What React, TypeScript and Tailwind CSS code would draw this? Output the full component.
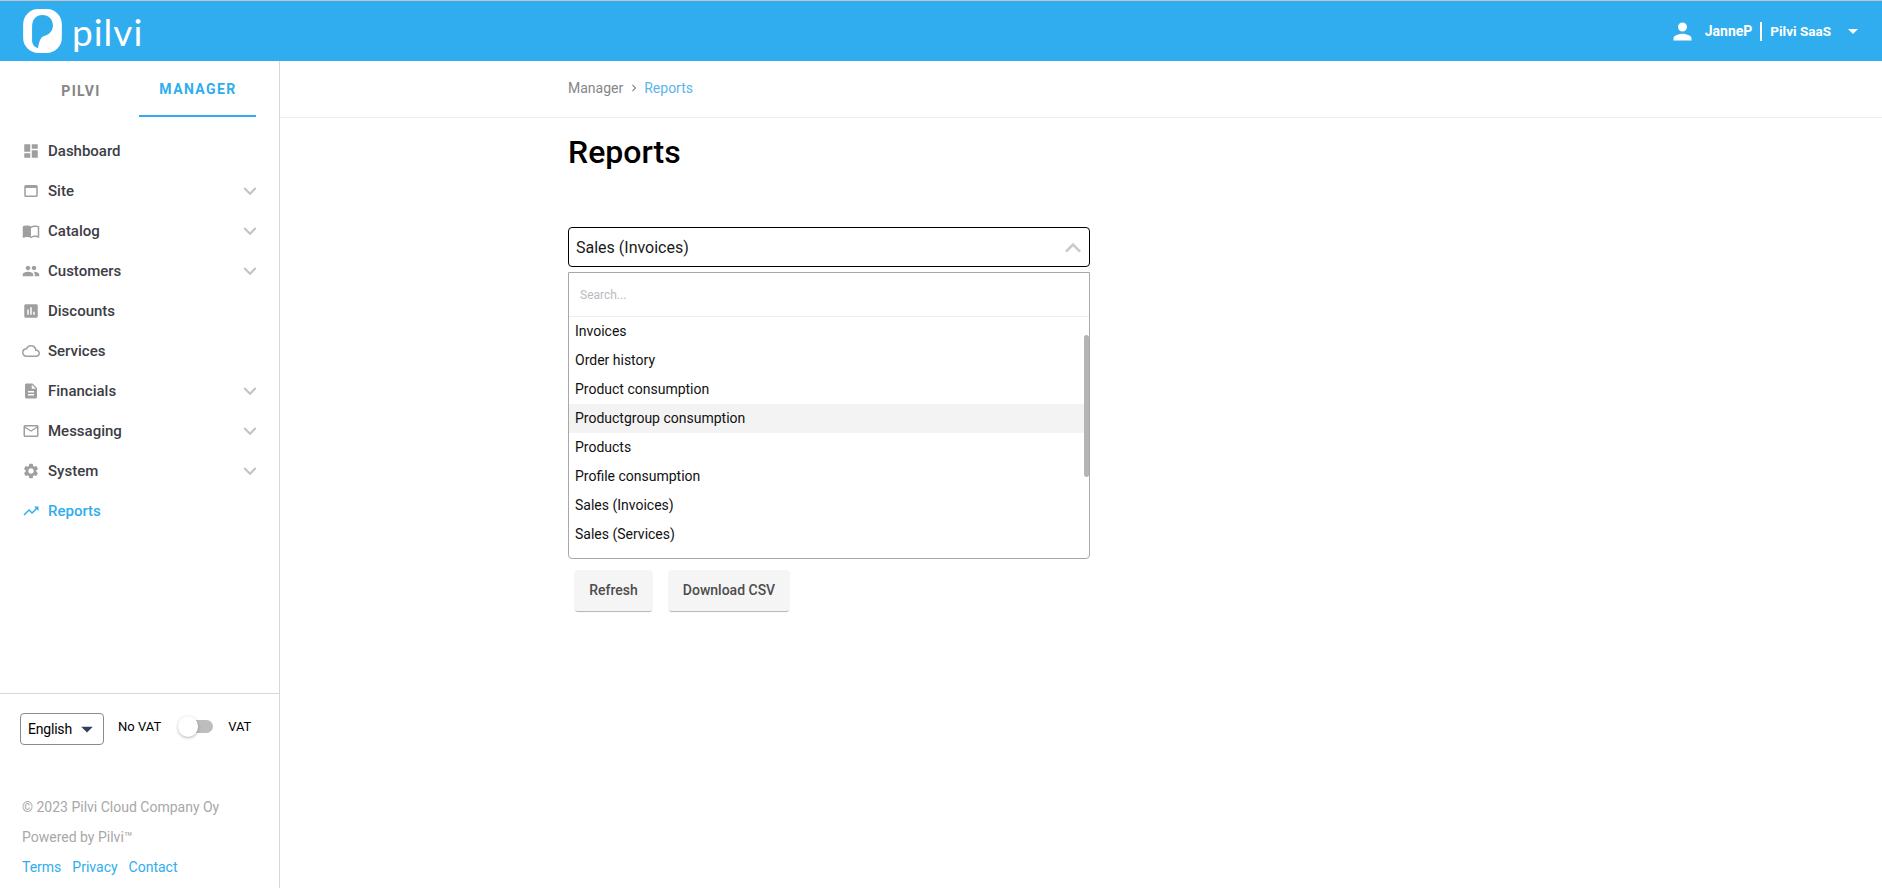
import type { IconType } from "react-icons";
import {
  MdArrowDropDown,
  MdAssessment,
  MdChevronRight,
  MdCloudQueue,
  MdDashboard,
  MdDescription,
  MdExpandLess,
  MdExpandMore,
  MdImportContacts,
  MdMailOutline,
  MdOutlineWebAsset,
  MdPeople,
  MdPerson,
  MdSettings,
  MdTrendingUp,
} from "react-icons/md";

type NavItem = { label: string; icon: IconType; expandable?: boolean; active?: boolean };

const navItems: NavItem[] = [
  { label: "Dashboard", icon: MdDashboard },
  { label: "Site", icon: MdOutlineWebAsset, expandable: true },
  { label: "Catalog", icon: MdImportContacts, expandable: true },
  { label: "Customers", icon: MdPeople, expandable: true },
  { label: "Discounts", icon: MdAssessment },
  { label: "Services", icon: MdCloudQueue },
  { label: "Financials", icon: MdDescription, expandable: true },
  { label: "Messaging", icon: MdMailOutline, expandable: true },
  { label: "System", icon: MdSettings, expandable: true },
  { label: "Reports", icon: MdTrendingUp, active: true },
];

const reportTypes = [
  "Invoices",
  "Order history",
  "Product consumption",
  "Productgroup consumption",
  "Products",
  "Profile consumption",
  "Sales (Invoices)",
  "Sales (Services)",
];

function Logo() {
  return (
    <div className="flex items-center gap-[10px]">
      <svg viewBox="0 0 117 133" className="h-[44px] w-[39px]">
        <rect width="117" height="133" rx="46" fill="#fff" />
        <path
          d="M27 55C27 30 40 18 58 18C78 18 90 32 90 50C90 68 78 78 62 82C52 85 48 100 45 118C35 115 27 108 27 95Z"
          fill="#30adee"
        />
      </svg>
      <span className="font-['Lato',sans-serif] text-[37px] leading-none font-normal tracking-[1px] text-white">
        pilvi
      </span>
    </div>
  );
}

function Header() {
  return (
    <header className="flex h-[61px] shrink-0 items-center justify-between border-t border-[#c4c4c4] bg-[#30adee] pr-[17px] pl-[23px]">
      <Logo />
      <div className="flex items-center text-[13.5px] font-bold text-white">
        <MdPerson size={27} className="mr-[9px]" />
        <span className="text-[14px]">JanneP</span>
        <span className="mx-[8px] h-[19px] w-[2px] bg-white" />
        <span>Pilvi SaaS</span>
        <MdArrowDropDown size={24} className="ml-[10px]" />
      </div>
    </header>
  );
}

function Sidebar() {
  return (
    <aside className="flex w-[280px] shrink-0 flex-col border-r border-[#d6d6d6]">
      <div className="flex h-[56px] shrink-0 px-[23px] text-[14px] font-bold tracking-[0.1em]">
        <div className="flex w-[117px] items-center justify-center pt-[4px] text-[#858585]">PILVI</div>
        <div className="flex w-[118px] items-center justify-center border-b-2 border-[#30adee] pt-[3px] pl-[1px] text-[#30adee]">
          MANAGER
        </div>
      </div>
      <nav className="mt-[14px] flex-1">
        {navItems.map((item) => (
          <div
            key={item.label}
            className={`flex h-10 items-center pr-[16px] pl-[22px] text-[15px] font-medium ${
              item.active ? "text-[#30adee]" : "text-[#3d3d45]"
            }`}
          >
            <item.icon
              size={18}
              className={`mr-[8px] ${item.active ? "text-[#30adee]" : "text-[#a09f9f]"}`}
            />
            <span className="flex-1">{item.label}</span>
            {item.expandable && <MdExpandMore size={26} className="text-[#c2c4c8]" />}
          </div>
        ))}
      </nav>
      <div className="h-[195px] shrink-0 border-t border-[#d9d9d9] px-[20px] pt-[19px]">
        <div className="flex items-start">
          <div className="flex h-[32px] w-[84px] items-center justify-between rounded border border-[#8b8b8b] pr-[2px] pl-[7px] text-[14px] tracking-[-0.2px] text-black">
            English
            <MdArrowDropDown size={28} className="text-[#33415c]" />
          </div>
          <span className="mt-[4px] ml-[14px] text-[13px] text-black">No VAT</span>
          <div className="relative mt-[7px] ml-[22px] h-[13px] w-[30px] rounded-full bg-[#bdbdbd]">
            <div className="absolute top-[-4px] left-[-5px] h-[21px] w-5 rounded-full bg-white shadow-[0_1px_3px_rgba(0,0,0,0.3)]" />
          </div>
          <span className="mt-[4px] ml-[15px] text-[13px] text-black">VAT</span>
        </div>
        <div className="mt-[53px] flex flex-col gap-[12px] pl-[2px] text-[14px] leading-[18px] text-[#a8a8a8]">
          <span>© 2023 Pilvi Cloud Company Oy</span>
          <span>Powered by Pilvi™</span>
          <div className="flex gap-[11px] text-[#30adee]">
            <span>Terms</span>
            <span>Privacy</span>
            <span>Contact</span>
          </div>
        </div>
      </div>
    </aside>
  );
}

function ReportSelect() {
  return (
    <div className="w-[522px]">
      <div className="flex h-10 items-center justify-between rounded border border-black pt-[1px] pl-[7px] text-[16px] text-[#1a1a1a]">
        Sales (Invoices)
        <MdExpandLess size={32} className="text-[#c8cacd]" />
      </div>
      <div className="relative mt-[5px] h-[287px] overflow-hidden rounded-b border border-[#a8a8a8]">
        <div className="flex h-[44px] items-center border-b border-[#eeeeee] px-[11px] text-[12px] text-[#b9bbc0]">
          Search...
        </div>
        {reportTypes.map((name) => (
          <div
            key={name}
            className={`flex h-[29px] items-center px-[6px] text-[14px] text-[#111] ${
              name === "Productgroup consumption" ? "bg-[#f3f3f3]" : ""
            }`}
          >
            {name}
          </div>
        ))}
        <div className="absolute top-[62px] right-0 h-[142px] w-[5px] rounded-sm bg-[#b5b5b5]" />
      </div>
    </div>
  );
}

function Main() {
  return (
    <main className="flex-1">
      <div className="flex h-[57px] items-center gap-[3.5px] border-b border-[#eeeeee] pb-[2px] pl-[288px] text-[14px]">
        <span className="text-[#85868a]">Manager</span>
        <MdChevronRight size={14} className="text-[#85868a]" />
        <span className="text-[#5bb5ea]">Reports</span>
      </div>
      <div className="pl-[288px]">
        <h1 className="mt-[16px] mb-[57px] text-[32px] leading-9 font-medium text-black">Reports</h1>
        <ReportSelect />
        <div className="mt-[11px] ml-[6px] flex gap-[15px] text-[14px] font-medium text-[#4d4d4d]">
          <button className="h-[41px] w-[79px] rounded bg-[#f5f5f5] shadow-[0_2px_1px_-1px_rgba(0,0,0,0.3)]">
            Refresh
          </button>
          <button className="h-[41px] w-[122px] rounded bg-[#f5f5f5] shadow-[0_2px_1px_-1px_rgba(0,0,0,0.3)]">
            Download CSV
          </button>
        </div>
      </div>
    </main>
  );
}

export default function App() {
  return (
    <div className="flex h-screen flex-col overflow-hidden bg-white font-['Roboto',sans-serif]">
      <Header />
      <div className="flex min-h-0 flex-1">
        <Sidebar />
        <Main />
      </div>
    </div>
  );
}
